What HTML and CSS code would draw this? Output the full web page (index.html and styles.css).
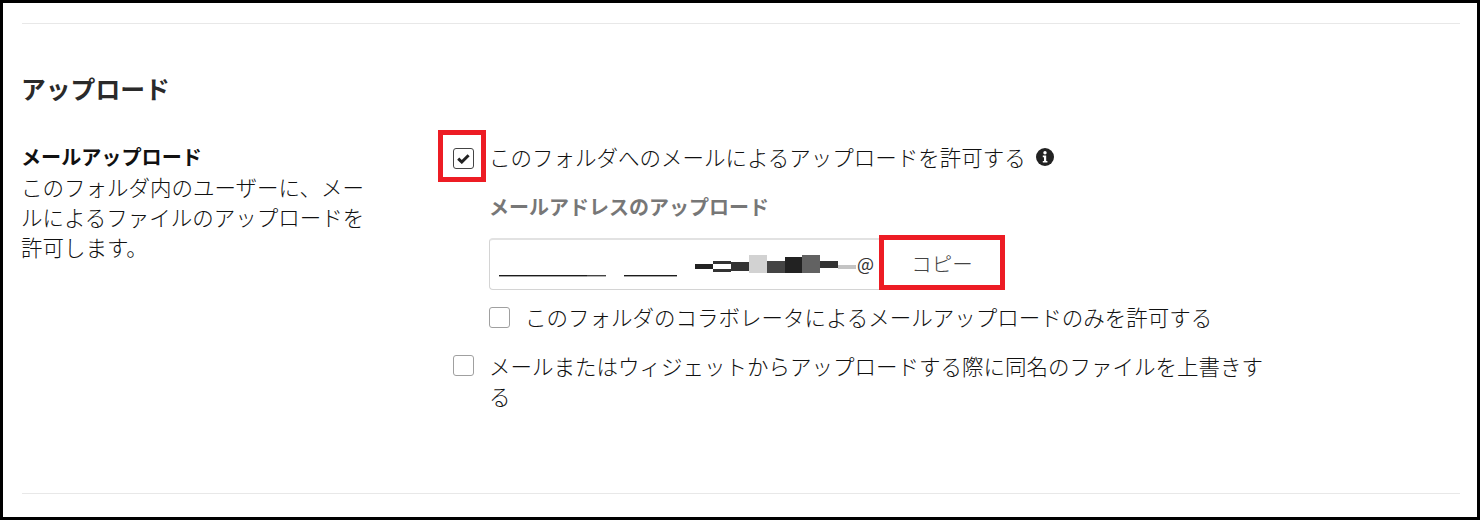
FILE: index.html
```html
<!DOCTYPE html>
<html lang="ja">
<head>
<meta charset="utf-8">
<title>アップロード</title>
<link rel="stylesheet" href="styles.css">
</head>
<body>
<main class="frame">
  <section class="section">
    <h2 class="heading">アップロード</h2>
    <div class="setting">
      <div class="intro">
        <div class="intro-title">メールアップロード</div>
        <p class="intro-text">このフォルダ内のユーザーに、メールによるファイルのアップロードを許可します。</p>
      </div>
      <div class="options">
        <div class="option option-main">
          <span class="box box-checked">
            <svg class="tick" width="13" height="11" viewBox="0 0 13 11"><path d="M1.2 5.6 L4.8 9 L11.6 2.2" fill="none" stroke="#222" stroke-width="3"/></svg>
            <span class="mark mark-check"></span>
          </span>
          <span class="option-text">このフォルダへのメールによるアップロードを許可する</span>
          <svg class="info" width="18" height="18" viewBox="0 0 18 18"><circle cx="9" cy="9" r="9" fill="#222"/><circle cx="9" cy="4.8" r="1.7" fill="#fff"/><path d="M6.8 7.6h3.4v5.4h1.2v1.6H6.8V13H8V9.2H6.8z" fill="#fff"/></svg>
        </div>
        <div class="address">
          <div class="address-title">メールアドレスのアップロード</div>
          <div class="address-row">
            <div class="address-field">
              <svg class="redacted" width="358" height="22" viewBox="0 0 358 22">
                <rect x="0" y="20" width="88" height="1.4" fill="#1c1c1c"/>
                <rect x="88" y="20" width="19" height="1.4" fill="#444"/>
                <rect x="125" y="20" width="53" height="1.4" fill="#1c1c1c"/>
                <rect x="196" y="9" width="18" height="5" fill="#222"/>
                <rect x="214" y="6" width="18" height="11" fill="#333"/>
                <rect x="214" y="9" width="18" height="5" fill="#fff"/>
                <rect x="232" y="7" width="18" height="9" fill="#333"/>
                <rect x="250" y="0" width="18" height="18" fill="#d2d2d2"/>
                <rect x="268" y="6" width="18" height="12" fill="#444"/>
                <rect x="286" y="2" width="17" height="16" fill="#222"/>
                <rect x="303" y="0" width="18" height="18" fill="#626262"/>
                <rect x="321" y="6" width="18" height="7" fill="#333"/>
                <rect x="339" y="10" width="18" height="4" fill="#c4c4c4"/>
              </svg>
              <span class="address-at">@</span>
            </div>
            <div class="copy">コピー</div>
          </div>
        </div>
        <div class="option option-sub">
          <span class="box"></span>
          <span class="option-text">このフォルダのコラボレータによるメールアップロードのみを許可する</span>
        </div>
        <div class="option option-last">
          <span class="box"></span>
          <span class="option-text option-wrap">メールまたはウィジェットからアップロードする際に同名のファイルを上書きする</span>
        </div>
      </div>
    </div>
  </section>
</main>
</body>
</html>
```
FILE: styles.css
```css
* { box-sizing: border-box; }
html, body { margin: 0; padding: 0; }
body {
  width: 1480px;
  height: 520px;
  overflow: hidden;
  background: #fff;
  color: #111;
  font-family: "Noto Sans CJK JP", "Noto Sans", sans-serif;
}
.frame {
  width: 1480px;
  height: 520px;
  border: 3px solid #000;
  padding: 20px 17px 23px 19px;
}
.section {
  height: 100%;
  border-top: 1px solid #e8e8e8;
  border-bottom: 1px solid #e8e8e8;
}
.heading {
  margin: 46px 0 0 -1px;
  font-size: 24.8px;
  line-height: 36px;
  font-weight: 700;
  color: #2a2a2a;
}
.setting {
  display: flex;
  margin-top: 36px;
}
.intro { width: 431px; flex: none; margin-left: -1px; margin-right: 1px; }
.intro-title {
  font-size: 20.1px;
  line-height: 30px;
  font-weight: 700;
}
.intro-text {
  width: 350px;
  margin: 0;
  font-size: 21.5px;
  line-height: 30px;
  font-weight: 300;
}
.options { flex: 1; min-width: 0; position: relative; }
.option { display: flex; align-items: center; }
.option-main { height: 30px; }
.box {
  position: relative;
  flex: none;
  display: flex;
  align-items: center;
  justify-content: center;
  width: 21px;
  height: 21px;
  border: 1px solid #a0a0a0;
  border-radius: 3px;
  background: #fff;
}
.box-checked { border-color: #444; margin-top: 3px; }
.mark-check {
  position: absolute;
  left: -16px;
  top: -19px;
  width: 48px;
  height: 52px;
  border: 5px solid #ed1c24;
}
.option-text {
  font-size: 21.5px;
  line-height: 30px;
  font-weight: 300;
  margin-left: 15px;
}
.info { flex: none; margin-left: 10px; }
.address { margin: 20px 0 0 36px; }
.address-title {
  font-size: 20px;
  line-height: 30px;
  font-weight: 700;
  color: #777;
}
.address-row {
  display: flex;
  align-items: flex-end;
  margin-top: 13px;
}
.address-field {
  display: flex;
  align-items: flex-start;
  width: 391px;
  height: 52px;
  padding: 15px 0 0 9px;
  border: 1px solid #d4d4d4;
  border-top: 2px solid #e2e2e2;
  border-radius: 4px 0 0 4px;
  border-right: 0;
  overflow: hidden;
}
.redacted { flex: none; }
.address-at { font-size: 18px; line-height: 16px; color: #333; }
.copy {
  width: 126px;
  height: 55px;
  margin-left: -1px;
  display: flex;
  align-items: center;
  justify-content: center;
  border: 5px solid #ed1c24;
  font-size: 20.5px;
  font-weight: 300;
  color: #444;
}
.option-sub { margin: 12px 0 0 36px; }
.option-last { margin-top: 19px; align-items: flex-start; }
.option-last .box { margin-top: 4px; }
.option-wrap { width: 790px; }
```
